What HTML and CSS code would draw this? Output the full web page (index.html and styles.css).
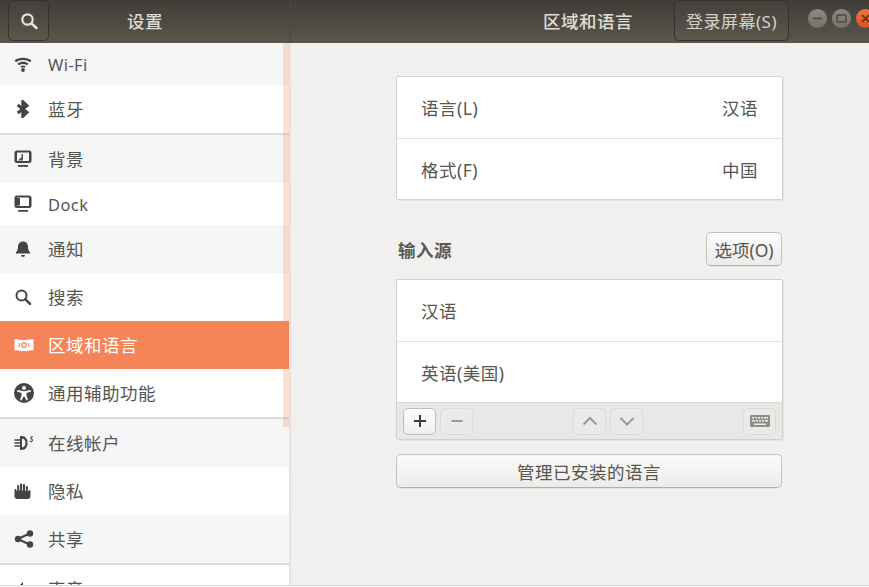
FILE: index.html
```html
<!DOCTYPE html>
<html lang="zh">
<head>
<meta charset="utf-8">
<title>设置</title>
<link rel="stylesheet" href="styles.css">
</head>
<body>
<div class="window">
  <header class="titlebar">
    <div class="tb-left">
      <button class="tb-btn tb-search" aria-label="搜索">
        <svg width="20" height="20" viewBox="0 0 20 20"><circle cx="8.5" cy="8.5" r="5.2" fill="none" stroke="#e4e1da" stroke-width="2.2"/><path d="M12.5 12.5L17.5 17" stroke="#e4e1da" stroke-width="2.6" stroke-linecap="round"/></svg>
      </button>
      <div class="tb-title tb-title-left">设置</div>
    </div>
    <div class="tb-right">
      <div class="tb-title tb-title-main">区域和语言</div>
      <button class="tb-btn tb-login">登录屏幕(S)</button>
      <div class="wm">
        <span class="wm-btn"><svg width="19" height="19" viewBox="0 0 19 19"><path d="M5 9.500h9" stroke="#4b4943" stroke-width="1.600"/></svg></span>
        <span class="wm-btn"><svg width="19" height="19" viewBox="0 0 19 19"><rect x="5" y="6" width="9" height="7" rx="1" fill="none" stroke="#4b4943" stroke-width="1.500"/></svg></span>
        <span class="wm-btn wm-close"><svg width="19" height="19" viewBox="0 0 19 19"><path d="M6 6l7 7M13 6l-7 7" stroke="#5a3018" stroke-width="1.700"/></svg></span>
      </div>
    </div>
  </header>
  <div class="body">
    <aside class="sidebar">
      <div class="row short alt">
        <svg class="ico" width="18" height="18" viewBox="0 0 18 18"><path d="M.5 5.500C5.200 1.700 12.800 1.700 17.500 5.500L16 7.200C11.900 4.300 6.100 4.300 2 7.200Z" fill="#444"/><path d="M3.500 8.700C6.700 6.200 11.300 6.200 14.500 8.700L13 10.300C10.600 8.500 7.400 8.500 5 10.300Z" fill="#444"/><path d="M6.300 11.400C7.900 10.200 10.100 10.200 11.700 11.400L10.600 12.700C9.600 12 8.400 12 7.400 12.700Z" fill="#444"/><circle cx="9" cy="15" r="1.900" fill="#444"/></svg>
        <span class="lab latin">Wi-Fi</span>
      </div>
      <div class="row">
        <svg class="ico" width="18" height="18" viewBox="0 0 18 18"><path d="M3.700 5L13 12.300 8.800 16.300V1.700L13 5.700 3.700 13" fill="none" stroke="#444" stroke-width="3"/></svg>
        <span class="lab">蓝牙</span>
      </div>
      <div class="sep"></div>
      <div class="row alt">
        <svg class="ico" width="18" height="18" viewBox="0 0 18 18"><path fill-rule="evenodd" d="M3 .500h12a2.500 2.500 0 0 1 2.500 2.500v7.500a2.500 2.500 0 0 1-2.500 2.500H3a2.500 2.500 0 0 1-2.500-2.500V3A2.500 2.500 0 0 1 3 .500zM3 2.500v8.500h12V2.500z" fill="#444"/><path d="M4 15h10v1.800H4z" fill="#444"/><path d="M4 10.500l3.500-3.500V4H9v6.500z" fill="#555"/></svg>
        <span class="lab">背景</span>
      </div>
      <div class="row short">
        <svg class="ico" width="18" height="18" viewBox="0 0 18 18"><path fill-rule="evenodd" d="M3 .500h12a2.500 2.500 0 0 1 2.500 2.500v7.500a2.500 2.500 0 0 1-2.500 2.500H3a2.500 2.500 0 0 1-2.500-2.500V3A2.500 2.500 0 0 1 3 .500zM3 2.500v8.500h12V2.500z" fill="#444"/><path d="M4 15h10v1.800H4zM3 3h3v7.500H3z" fill="#444"/></svg>
        <span class="lab latin">Dock</span>
      </div>
      <div class="row alt">
        <svg class="ico" width="18" height="18" viewBox="0 0 18 18"><path d="M9 1.500c3.200 0 5 2.400 5 5.500 0 2.800.8 4.300 2.200 5.500v1H1.800v-1C3.200 11.300 4 9.800 4 7c0-3.100 1.800-5.500 5-5.500zM7 15h4a2 2 0 0 1-4 0z" fill="#444"/></svg>
        <span class="lab">通知</span>
      </div>
      <div class="row">
        <svg class="ico" width="18" height="18" viewBox="0 0 18 18"><circle cx="7.500" cy="7.500" r="5" fill="none" stroke="#444" stroke-width="2"/><path d="M11.200 11.200L16 15.800" stroke="#444" stroke-width="2.500" stroke-linecap="round"/></svg>
        <span class="lab">搜索</span>
      </div>
      <div class="row active">
        <svg class="ico" width="20" height="18" viewBox="0 0 20 18"><path fill-rule="evenodd" d="M.5 3.500c3-1 6 .5 9.500.5s6.500-1.500 9.500-.5v11c-3-1-6 .5-9.500.5s-6.500-1.500-9.500-.5zM10 6a3 3 0 1 0 0 6 3 3 0 0 0 0-6zM10 7.300a1.700 1.700 0 1 1 0 3.400 1.700 1.700 0 0 1 0-3.400zM4.500 7v4h1.200V7zM14.300 7v4h1.200V7z" fill="#fff"/></svg>
        <span class="lab">区域和语言</span>
      </div>
      <div class="row">
        <svg class="ico" width="20" height="20" viewBox="0 0 20 20"><path fill-rule="evenodd" d="M10 0a10 10 0 1 1 0 20 10 10 0 0 1 0-20zM10 3a2 2 0 1 0 0 4 2 2 0 0 0 0-4zM3.500 7l-.5 1.500 4.500 1.500v2.500L6 17l1.500.6L10 13l2.500 4.600L14 17l-1.500-4.500V10L17 8.500 16.500 7 10 8.200z" fill="#444"/></svg>
        <span class="lab">通用辅助功能</span>
      </div>
      <div class="sep"></div>
      <div class="row alt">
        <svg class="ico" width="20" height="18" viewBox="0 0 20 18"><path fill-rule="evenodd" d="M6 2h1.500c4 0 6 2.800 6 7s-2 7-6 7H6zM8 4.500v9c2.400-.3 3.500-2 3.500-4.500S10.400 4.800 8 4.500z" fill="#444"/><path d="M.5 6h5.500M.5 9H6M.5 12H6" stroke="#444" stroke-width="1.600"/><path d="M19 3.200c-.8-.8-2.300-.5-2.200.7s1.900 1.200 1.600 2.600-1.800 1.300-2.500.6" fill="none" stroke="#444" stroke-width="1.100"/></svg>
        <span class="lab">在线帐户</span>
      </div>
      <div class="row">
        <svg class="ico" width="18" height="18" viewBox="0 0 18 18"><path d="M.5 8c0-1.400 2-1.400 2 0v1h.7V4c0-1.400 2-1.400 2 0v4.500h.8V2.500c0-1.400 2.100-1.400 2.100 0v6h.8V3c0-1.400 2.100-1.400 2.100 0v6h.8V5c0-1.400 2-1.400 2 0v4.500l1-1c1-.8 2.400.2 1.700 1.300L16.500 12v2a3 3 0 0 1-3 3H3.500a3 3 0 0 1-3-3z" fill="#444"/></svg>
        <span class="lab">隐私</span>
      </div>
      <div class="row alt">
        <svg class="ico" width="20" height="20" viewBox="0 0 20 20"><path d="M4 10L15.500 4.500M4 10l11.500 5.500" stroke="#444" stroke-width="2"/><circle cx="4" cy="10" r="3.200" fill="#444"/><circle cx="16" cy="4.500" r="3.200" fill="#444"/><circle cx="16" cy="15.500" r="3.200" fill="#444"/></svg>
        <span class="lab">共享</span>
      </div>
      <div class="sep"></div>
      <div class="row">
        <svg class="ico" width="18" height="18" viewBox="0 0 18 18"><path d="M2 6h3l4-4v14l-4-4H2zM11 5c2 1 3 2.500 3 4s-1 3-3 4z" fill="#444"/></svg>
        <span class="lab">声音</span>
      </div>
      <div class="scrollbar"></div>
    </aside>
    <main class="main">
      <section class="panel">
        <div class="prow"><span>语言(L)</span><span>汉语</span></div>
        <div class="prow"><span>格式(F)</span><span>中国</span></div>
      </section>
      <div class="input-head">
        <h2 class="heading">输入源</h2>
        <button class="btn btn-options">选项(O)</button>
      </div>
      <section class="panel">
        <div class="prow"><span>汉语</span></div>
        <div class="prow"><span>英语(美国)</span></div>
        <div class="toolbar">
          <div class="tgroup">
            <button class="tbtn tbtn-on"><svg width="14" height="14" viewBox="0 0 14 14"><path d="M1 7h12M7 1v12" stroke="#3c3c3c" stroke-width="2"/></svg></button>
            <button class="tbtn"><svg width="14" height="14" viewBox="0 0 14 14"><path d="M1.500 7h11" stroke="#9b9a96" stroke-width="2"/></svg></button>
          </div>
          <div class="tgroup">
            <button class="tbtn"><svg width="16" height="12" viewBox="0 0 16 12"><path d="M1.500 9.500L8 3l6.500 6.500" fill="none" stroke="#9b9a96" stroke-width="2"/></svg></button>
            <button class="tbtn"><svg width="16" height="12" viewBox="0 0 16 12"><path d="M1.500 3L8 9.500 14.500 3" fill="none" stroke="#9b9a96" stroke-width="2"/></svg></button>
          </div>
          <button class="tbtn"><svg width="20" height="14" viewBox="0 0 20 14"><path fill-rule="evenodd" d="M1 1h18a1 1 0 0 1 1 1v10a1 1 0 0 1-1 1H1a1 1 0 0 1-1-1V2a1 1 0 0 1 1-1zM2 3v1.500h2V3zM5 3v1.500h2V3zM8 3v1.500h2V3zM11 3v1.500h2V3zM14 3v1.500h4V3zM2 6v1.500h3V6zM6 6v1.500h2V6zM9 6v1.500h2V6zM12 6v1.500h2V6zM15 6v1.500h3V6zM4 9.500V11h12V9.500z" fill="#8f8e8a"/></svg></button>
        </div>
      </section>
      <button class="btn btn-manage">管理已安装的语言</button>
    </main>
  </div>
</div>
</body>
</html>
```

FILE: styles.css
```css
* { box-sizing: border-box; }
html, body { margin: 0; padding: 0; height: 100%; overflow: hidden; }
body {
  font-family: "Noto Sans", "Noto Sans CJK SC", sans-serif;
  font-size: 17.5px;
  letter-spacing: .5px;
  color: #565551;
  background: #fff;
}
button { font: inherit; color: inherit; letter-spacing: inherit; }
.window {
  width: 869px;
  height: 586px;
  display: flex;
  flex-direction: column;
  overflow: hidden;
  border-bottom: 1px solid #d6d5d2;
}

.titlebar {
  height: 43px;
  flex: none;
  display: flex;
  background: linear-gradient(#3f3d37, #5a564c);
  color: #dfdcd4;
}
.tb-left {
  width: 291px;
  flex: none;
  display: flex;
  align-items: flex-start;
  border-right: 1px solid #4b4841;
}
.tb-right { flex: 1; display: flex; align-items: flex-start; }
.tb-btn {
  background: rgba(255, 255, 255, .02);
  border: 1px solid #35332e;
  border-radius: 5px;
  color: #d5d2ca;
  padding: 0;
  height: 41px;
  display: flex;
  align-items: center;
  justify-content: center;
}
.tb-search { width: 41px; margin-left: 8px; }
.tb-title { line-height: 42px; font-weight: 500; }
.tb-title-left { margin-left: 78px; }
.tb-title-main { margin-left: 252px; width: 131px; }
.tb-login { width: 115px; font-size: 17px; }
.wm { display: flex; gap: 5px; margin-left: 19px; margin-top: 9px; }
.wm-btn {
  width: 19px; height: 19px; flex: none; border-radius: 50%;
  background: linear-gradient(#8c8981, #75726a);
  display: flex;
}
.wm-close { background: linear-gradient(#f2743d, #dd4f1c); }

.body { flex: 1; display: flex; min-height: 0; background: #f1f0ee; }
.sidebar {
  width: 291px;
  flex: none;
  position: relative;
  overflow: hidden;
  background: #fff;
  border-right: 2px solid #e3e2df;
}
.row {
  height: 48px;
  flex: none;
  display: flex;
  align-items: center;
  background: #fff;
  position: relative;
}
.row.short { height: 42px; }
.row.alt { background: #f6f6f7; }
.row.active { background: #f58558; color: #fff; }
.ico { position: absolute; left: 14px; top: 50%; transform: translateY(-50%); }
.lab { margin-left: 48px; margin-bottom: 2px; }
.latin { font-size: 16.5px; letter-spacing: .4px; margin-bottom: 0; }
.sep { height: 2px; background: #dddcd9; }
.scrollbar {
  position: absolute;
  right: 0;
  top: 0;
  width: 6px;
  height: 384px;
  background: rgba(244, 132, 87, .25);
}

.main { flex: 1; padding: 33px 0 0 105px; }
.panel {
  width: 387px;
  background: #fff;
  border: 1px solid #d3d1cc;
  border-radius: 2px;
  box-shadow: 1px 1px 1px rgba(0,0,0,.06);
}
.prow {
  height: 61px;
  display: flex;
  align-items: center;
  justify-content: space-between;
  padding: 0 24px 0 24px;
}
.prow + .prow { border-top: 1px solid #e2e1de; }
.input-head {
  width: 386px;
  display: flex;
  align-items: center;
  justify-content: space-between;
  margin-top: 32px;
  margin-bottom: 13px;
  padding-left: 2px;
}
.heading { margin: 0; font-size: 17.5px; font-weight: 700; color: #5a5954; }
.btn {
  background: linear-gradient(#fbfbfa, #ecebe9);
  border: 1px solid #c4c2bc;
  border-bottom-color: #b0aea8;
  border-radius: 5px;
  box-shadow: 0 1px 0 rgba(0,0,0,.05);
  padding: 0;
}
.btn-options { width: 76px; height: 34px; letter-spacing: 0; }
.btn-manage { display: block; width: 386px; height: 34px; margin-top: 14px; }

.toolbar {
  height: 37px;
  background: #e9e8e6;
  border-top: 1px solid #dad9d5;
  display: flex;
  align-items: center;
  justify-content: space-between;
  padding: 0 6px;
}
.tgroup { display: flex; gap: 4px; }
.tbtn {
  width: 33px;
  height: 27px;
  padding: 0;
  border: 1px solid #dcdbd7;
  border-radius: 5px;
  background: #ebeae8;
  display: flex;
  align-items: center;
  justify-content: center;
}
.tbtn-on { background: linear-gradient(#fdfdfc, #f0efed); border-color: #bdbbb5; }
```
